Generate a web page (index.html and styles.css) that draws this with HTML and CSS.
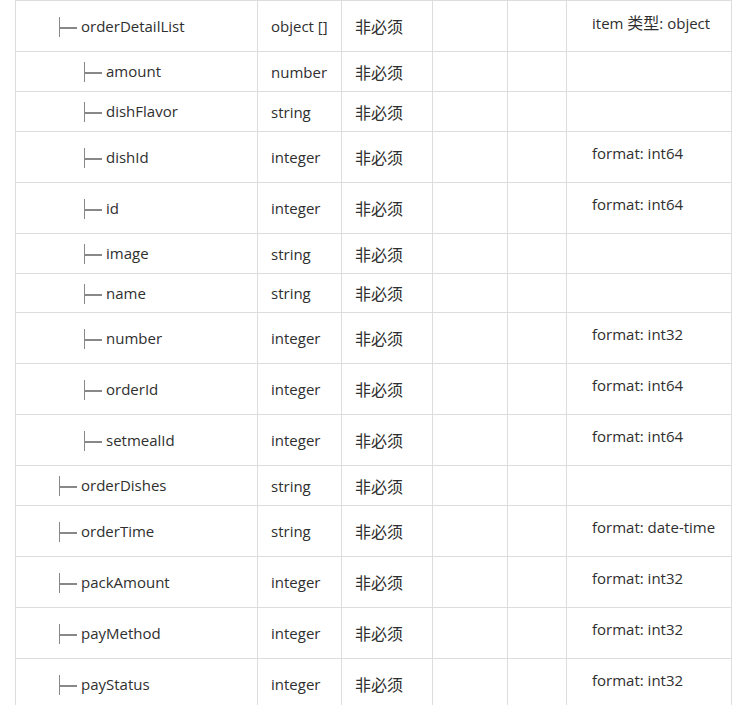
FILE: index.html
```html
<!DOCTYPE html>
<html>
<head>
<meta charset="utf-8">
<link rel="stylesheet" href="styles.css">
</head>
<body>
<table class="schema">
  <colgroup>
    <col class="c-name"><col class="c-type"><col class="c-req"><col class="c-def"><col class="c-note"><col class="c-rem">
  </colgroup>
  <tbody>
    <tr class="tall"><td class="name d1"><span class="tree"></span>orderDetailList</td><td>object []</td><td class="req">非必须</td><td></td><td></td><td class="rem">item <span class="cjk">类型</span>: object</td></tr>
    <tr><td class="name d2"><span class="tree"></span>amount</td><td>number</td><td class="req">非必须</td><td></td><td></td><td class="rem"></td></tr>
    <tr><td class="name d2"><span class="tree"></span>dishFlavor</td><td>string</td><td class="req">非必须</td><td></td><td></td><td class="rem"></td></tr>
    <tr class="tall"><td class="name d2"><span class="tree"></span>dishId</td><td>integer</td><td class="req">非必须</td><td></td><td></td><td class="rem">format: int64</td></tr>
    <tr class="tall"><td class="name d2"><span class="tree"></span>id</td><td>integer</td><td class="req">非必须</td><td></td><td></td><td class="rem">format: int64</td></tr>
    <tr><td class="name d2"><span class="tree"></span>image</td><td>string</td><td class="req">非必须</td><td></td><td></td><td class="rem"></td></tr>
    <tr class="short"><td class="name d2"><span class="tree"></span>name</td><td>string</td><td class="req">非必须</td><td></td><td></td><td class="rem"></td></tr>
    <tr class="tall"><td class="name d2"><span class="tree"></span>number</td><td>integer</td><td class="req">非必须</td><td></td><td></td><td class="rem">format: int32</td></tr>
    <tr class="tall"><td class="name d2"><span class="tree"></span>orderId</td><td>integer</td><td class="req">非必须</td><td></td><td></td><td class="rem">format: int64</td></tr>
    <tr class="tall"><td class="name d2"><span class="tree"></span>setmealId</td><td>integer</td><td class="req">非必须</td><td></td><td></td><td class="rem">format: int64</td></tr>
    <tr><td class="name d1"><span class="tree"></span>orderDishes</td><td>string</td><td class="req">非必须</td><td></td><td></td><td class="rem"></td></tr>
    <tr class="tall"><td class="name d1"><span class="tree"></span>orderTime</td><td>string</td><td class="req">非必须</td><td></td><td></td><td class="rem">format: date-time</td></tr>
    <tr class="tall"><td class="name d1"><span class="tree"></span>packAmount</td><td>integer</td><td class="req">非必须</td><td></td><td></td><td class="rem">format: int32</td></tr>
    <tr class="tall"><td class="name d1"><span class="tree"></span>payMethod</td><td>integer</td><td class="req">非必须</td><td></td><td></td><td class="rem">format: int32</td></tr>
    <tr class="tall"><td class="name d1"><span class="tree"></span>payStatus</td><td>integer</td><td class="req">非必须</td><td></td><td></td><td class="rem">format: int32</td></tr>
  </tbody>
</table>
</body>
</html>
```

FILE: styles.css
```css
html, body {
  margin: 0;
  padding: 0;
  background: #fff;
}
body {
  font-family: "Open Sans", "Noto Sans CJK SC", sans-serif;
  font-size: 15px;
  color: #2f2f2f;
  overflow: hidden;
}
.schema {
  margin-left: 15px;
  border-collapse: collapse;
  table-layout: fixed;
  width: 716px;
}
.c-name { width: 242px; }
.c-type { width: 84px; }
.c-req { width: 91px; }
.c-def { width: 75px; }
.c-note { width: 59px; }
.c-rem { width: 165px; }
.schema td {
  box-sizing: border-box;
  border: 1px solid #ddd;
  padding: 0 13px;
  line-height: 20px;
  height: 40px;
  vertical-align: middle;
  white-space: nowrap;
}
.schema tr.tall td { height: 51px; }
.schema tr.short td { height: 39px; }
.schema td.req {
  padding-left: 13px;
  font-family: "Noto Sans CJK SC", sans-serif;
  font-size: 16px;
}
.cjk {
  font-family: "Noto Sans CJK SC", sans-serif;
  font-size: 16px;
}
.schema td.rem {
  vertical-align: top;
  padding-top: 11px;
  padding-left: 25px;
}
.name.d1 { padding-left: 43px; }
.name.d2 { padding-left: 68px; }
.tree {
  display: inline-block;
  position: relative;
  width: 18px;
  height: 20px;
  margin-right: 4px;
  border-left: 1px solid #888;
  vertical-align: -5px;
  box-sizing: border-box;
}
.tree::after {
  content: "";
  position: absolute;
  left: 0;
  top: 10px;
  width: 17px;
  height: 2px;
  background: #888;
}
```
